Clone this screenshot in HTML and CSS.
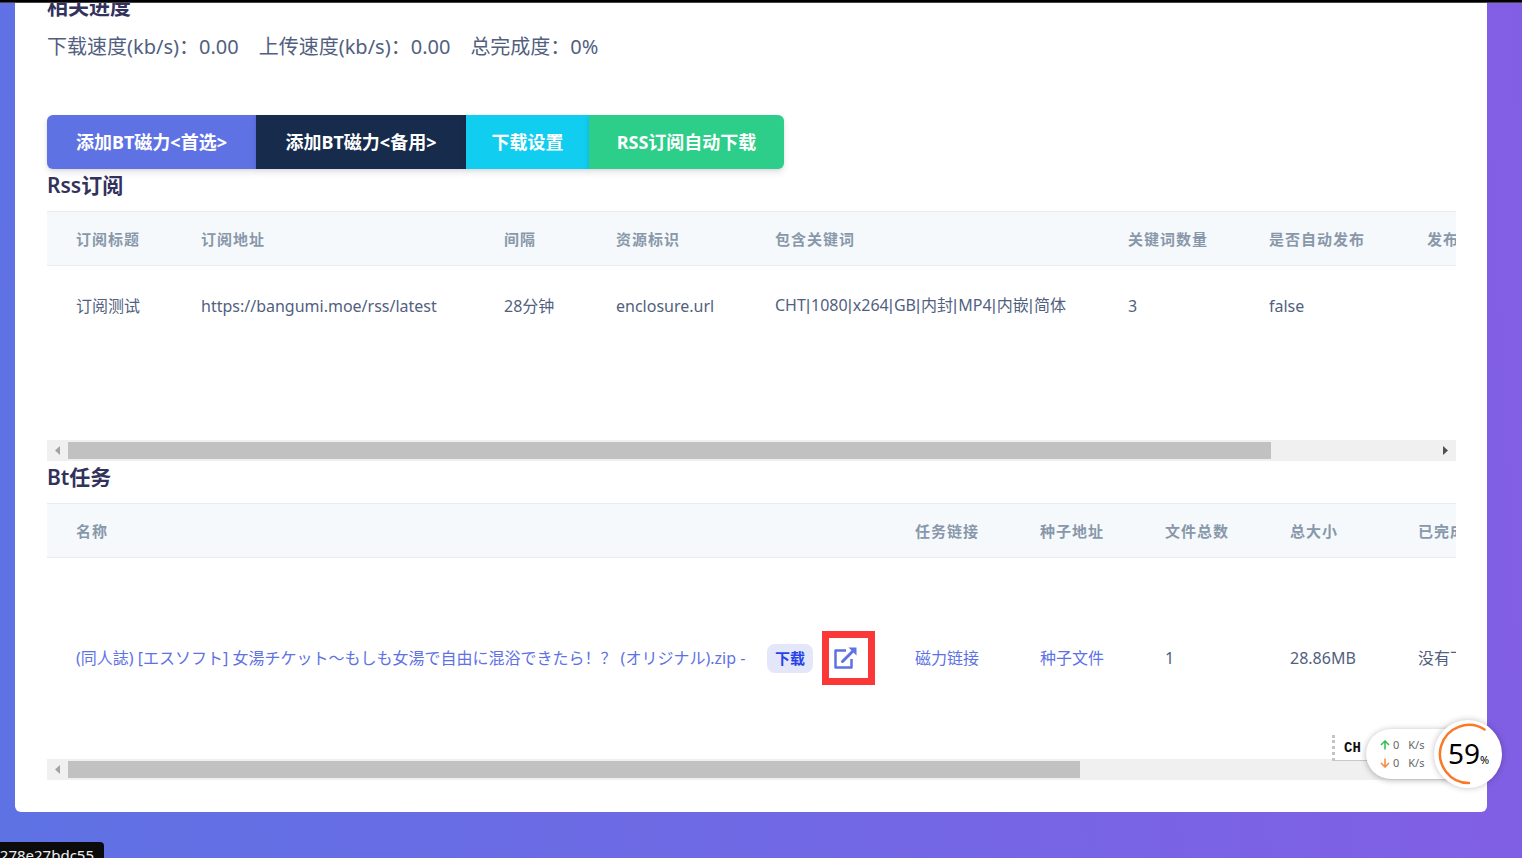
FILE: index.html
```html
<!DOCTYPE html>
<html lang="zh-CN">
<head>
<meta charset="utf-8">
<title>Bt任务</title>
<link rel="stylesheet" href="styles.css">
</head>
<body>
<div class="top-edge"></div>
<main class="card">
  <h2 class="title">相关进度</h2>
  <p class="stats"><span>下载速度(kb/s)：0.00</span><span>上传速度(kb/s)：0.00</span><span>总完成度：0%</span></p>
  <div class="actions">
    <button type="button" class="btn primary">添加BT磁力&lt;首选&gt;</button>
    <button type="button" class="btn dark">添加BT磁力&lt;备用&gt;</button>
    <button type="button" class="btn info">下载设置</button>
    <button type="button" class="btn success">RSS订阅自动下载</button>
  </div>

  <section>
    <h2 class="title">Rss订阅</h2>
    <div class="scroller rss">
      <table class="grid rss-grid">
        <colgroup><col class="w125"><col class="w303"><col class="w112"><col class="w159"><col class="w353"><col class="w141"><col class="w158"><col></colgroup>
        <thead><tr><th>订阅标题</th><th>订阅地址</th><th>间隔</th><th>资源标识</th><th>包含关键词</th><th>关键词数量</th><th>是否自动发布</th><th>发布</th></tr></thead>
        <tbody><tr><td>订阅测试</td><td>https://bangumi.moe/rss/latest</td><td>28分钟</td><td>enclosure.url</td><td>CHT<i>|</i>1080<i>|</i>x264<i>|</i>GB<i>|</i>内封<i>|</i>MP4<i>|</i>内嵌<i>|</i>简体</td><td>3</td><td>false</td><td></td></tr></tbody>
      </table>
    </div>
    <div class="bar">
      <svg class="arrow" viewBox="0 0 21 21"><path d="M13 6v9l-5-4.500z" fill="#a3a3a3"/></svg>
      <div class="track"><div class="thumb" style="width:88%"></div></div>
      <svg class="arrow" viewBox="0 0 21 21"><path d="M8 6v9l5-4.500z" fill="#505050"/></svg>
    </div>
  </section>

  <section>
    <h2 class="title">Bt任务</h2>
    <div class="scroller">
      <table class="grid bt-grid">
        <colgroup><col class="w839"><col class="w125"><col class="w125"><col class="w125"><col class="w128"><col></colgroup>
        <thead><tr><th>名称</th><th>任务链接</th><th>种子地址</th><th>文件总数</th><th>总大小</th><th>已完成</th></tr></thead>
        <tbody><tr>
          <td><div class="name"><a href="#" class="file">(同人誌) [エスソフト] 女湯チケット～もしも女湯で自由に混浴できたら！？ (オリジナル).zip -</a><a href="#" class="badge">下载</a><a href="#" class="open" aria-label="打开"><svg viewBox="0 0 24 24"><path d="M13 4.500H2.500v17h16V13" fill="none" stroke="#5e72e4" stroke-width="2.500" stroke-linejoin="round"/><path d="M9.500 15.500 20 5" fill="none" stroke="#5e72e4" stroke-width="3" stroke-linecap="round"/><path d="M15.500 1.500h8v8z" fill="#5e72e4"/></svg></a></div></td>
          <td><a href="#">磁力链接</a></td><td><a href="#">种子文件</a></td><td>1</td><td>28.86MB</td><td>没有下载</td>
        </tr></tbody>
      </table>
    </div>
    <div class="bar">
      <svg class="arrow" viewBox="0 0 21 21"><path d="M13 6v9l-5-4.500z" fill="#a3a3a3"/></svg>
      <div class="track"><div class="thumb" style="width:74%"></div></div>
      <svg class="arrow" viewBox="0 0 21 21"><path d="M8 6v9l5-4.500z" fill="#505050"/></svg>
    </div>
  </section>
</main>

<div class="ime"><span>CH</span></div>
<div class="speed">
  <div class="rate"><svg viewBox="0 0 10 10"><path d="M5 9.500V1M1 5l4-4 4 4" stroke="#2fc04c"/></svg><span>0</span><span>K/s</span></div>
  <div class="rate"><svg viewBox="0 0 10 10"><path d="M5 .5V9M1 5l4 4 4-4" stroke="#f58a3c"/></svg><span>0</span><span>K/s</span></div>
</div>
<div class="ball">
  <svg viewBox="0 0 68 68"><path d="M50.500 9.500A29 29 0 1 0 35 63" fill="none" stroke="#f97a26" stroke-width="2.500" stroke-linecap="round"/></svg>
  <span class="num">59</span><span class="pct">%</span>
</div>
<div class="status">278e27bdc55</div>
</body>
</html>
```
FILE: styles.css
```css
* { box-sizing: border-box; }
body {
  margin: 0;
  min-height: 100vh;
  position: relative;
  overflow: hidden;
  background: linear-gradient(87deg, #5e72e4, #825ee4);
  font: 16px/24px "Noto Sans", "Noto Sans CJK SC", sans-serif;
  color: #525f7f;
}
.top-edge {
  position: absolute;
  inset: 0 0 auto;
  height: 3px;
  background: #000;
  border-bottom: 1px solid #444;
  z-index: 2;
}
.card {
  margin: -10px 35px 46px 15px;
  padding: 0 31px 32px 32px;
  background: #fff;
  border-radius: 6px;
  display: flow-root;
}
.title {
  margin: 0 0 10px;
  font-size: 21px;
  line-height: 32px;
  font-weight: 600;
  color: #32325d;
}
.stats {
  display: flex;
  gap: 20px;
  margin: 0 0 53px;
  font-size: 20px;
  line-height: 30px;
}
.actions { display: flex; }
.btn {
  height: 54px;
  padding: 0 25px;
  border: 0;
  color: #fff;
  font: 700 18px/28px "Noto Sans", "Noto Sans CJK SC", sans-serif;
  box-shadow: 0 4px 6px rgba(50, 50, 93, .11), 0 1px 3px rgba(0, 0, 0, .08);
}
.btn:first-child { border-radius: 6px 0 0 6px; }
.btn:last-child { border-radius: 0 6px 6px 0; }
.primary { background: #5e72e4; min-width: 209px; }
.dark { background: #172b4d; min-width: 210px; }
.info { background: #11cdef; min-width: 123px; }
.success { background: #2dce89; min-width: 195px; }

.scroller { overflow: hidden; }
.rss { min-height: 229px; }
.grid { table-layout: fixed; border-collapse: collapse; }
.rss-grid { width: 1601px; }
.bt-grid { width: 1905px; }
.w112 { width: 112px; }
.w125 { width: 125px; }
.w128 { width: 128px; }
.w141 { width: 141px; }
.w158 { width: 158px; }
.w159 { width: 159px; }
.w303 { width: 303px; }
.w353 { width: 353px; }
.w839 { width: 839px; }
th, td { padding: 0 0 0 29px; text-align: left; white-space: nowrap; }
th {
  height: 54px;
  background: #f6f9fc;
  border-top: 1px solid #e9ecef;
  border-bottom: 1px solid #e9ecef;
  color: #8898aa;
  font-size: 15px;
  font-weight: 600;
  letter-spacing: 1px;
}
td { height: 80px; }
td i { font-family: "Liberation Sans", sans-serif; font-style: normal; padding-right: 1px; }
.bt-grid td { height: 201px; }
a { color: #5e72e4; text-decoration: none; }
.name { display: flex; align-items: center; width: 799px; }
.file { flex: 1; }
.badge {
  margin-right: 9px;
  padding: 0 8px;
  border-radius: 8px;
  background: #e4e7fa;
  color: #2643e9;
  font-size: 15px;
  line-height: 29px;
  font-weight: 600;
}
.open { width: 53px; height: 54px; padding: 8px 4px; border: 7px solid #fb3737; }
.open svg { display: block; width: 24px; height: 24px; }

.bar { display: flex; height: 21px; background: #f0f0f0; }
.arrow { width: 21px; height: 21px; }
.track { flex: 1; padding: 2px 0; }
.thumb { height: 17px; background: #c1c1c1; }

.ime {
  position: absolute;
  right: 150px;
  bottom: 97px;
  width: 40px;
  height: 26px;
  padding-left: 9px;
  background: #fff;
  border-left: 3px dotted #c4c4c4;
  border-bottom: 1px solid #c8c8c8;
  font: 700 14px/26px "Liberation Mono", monospace;
  color: #111;
}
.speed {
  position: absolute;
  right: 70px;
  bottom: 79px;
  width: 86px;
  height: 50px;
  padding: 7px 0 0 14px;
  border-radius: 25px 0 0 25px;
  background: #fff;
  box-shadow: 0 1px 6px rgba(0, 0, 0, .3);
  font-size: 11px;
  line-height: 18px;
  color: #666;
}
.rate { display: flex; align-items: center; }
.rate svg { width: 10px; height: 10px; margin-right: 3px; fill: none; stroke-width: 1.5; }
.rate span + span { margin-left: 9px; }
.ball {
  position: absolute;
  right: 20px;
  bottom: 70px;
  width: 68px;
  height: 68px;
  padding-left: 14px;
  border-radius: 50%;
  background: #fff;
  box-shadow: 0 0 6px rgba(0, 0, 0, .25);
  display: flex;
  align-items: baseline;
  color: #000;
  line-height: 66px;
}
.ball svg { position: absolute; inset: 0; }
.num { font-size: 28px; }
.pct { font-size: 11px; }
.status {
  position: absolute;
  left: 0;
  bottom: -9px;
  width: 104px;
  height: 25px;
  padding-right: 10px;
  display: flex;
  justify-content: flex-end;
  border-radius: 0 4px 0 0;
  background: #0b0b0b;
  color: #eee;
  font-size: 15px;
  line-height: 27px;
}
```
